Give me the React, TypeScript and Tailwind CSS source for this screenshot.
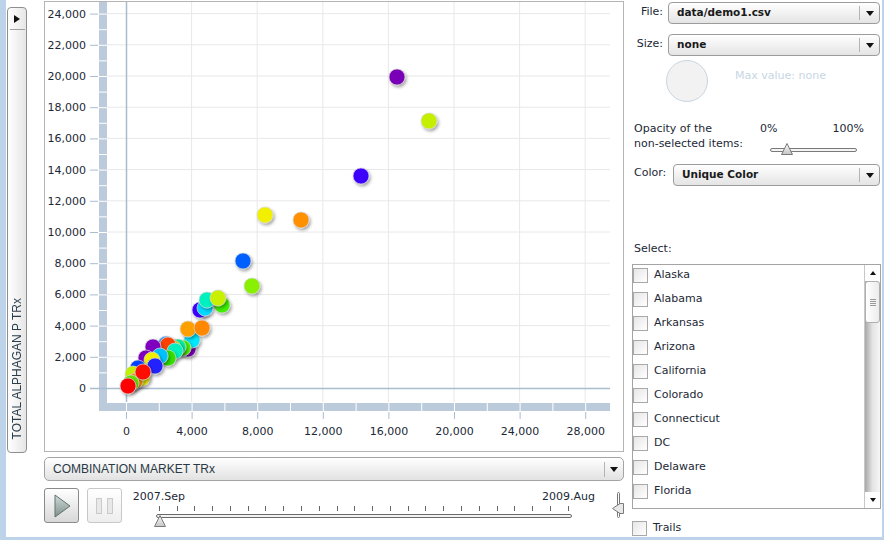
import React from "react";

const TEXT = "#1c2836";
const AXIS = "#a9bdd0";
const BAR = "#bccbdb";

const px = (v: number) => 126 + (v * 65.6) / 4000;
const py = (v: number) => 388 - (v * 31.2) / 2000;

// page coordinates of the bubbles, drawn back to front
const BUBBLES: [number, number, string][] = [
  [397, 77, "#7a00b8"],
  [429, 121, "#c4f000"],
  [361, 176, "#3c00ff"],
  [265, 215, "#f0f000"],
  [301, 220, "#ff9000"],
  [243, 261, "#0060ff"],
  [252, 286, "#88f000"],
  [200, 310, "#3c00ff"],
  [222, 305, "#40f000"],
  [205, 308, "#00d8ff"],
  [207, 300, "#00f0c0"],
  [218, 298, "#c8f000"],
  [188, 349, "#8000c0"],
  [192, 340, "#00e8ff"],
  [188, 329, "#ffa000"],
  [202, 328, "#ff8800"],
  [166, 344, "#40a0ff"],
  [183, 348, "#50f000"],
  [178, 347, "#00f0a0"],
  [173, 348, "#c8f000"],
  [168, 345, "#ff4000"],
  [175, 351, "#00f0c0"],
  [168, 358, "#30e000"],
  [153, 347, "#8000c0"],
  [146, 358, "#8000c0"],
  [160, 356, "#00c0ff"],
  [152, 360, "#f0f000"],
  [155, 366, "#2020ff"],
  [138, 368, "#0040ff"],
  [133, 374, "#c0f000"],
  [142, 378, "#f0f000"],
  [135, 381, "#ff9000"],
  [143, 372, "#ff1000"],
  [131, 383, "#60e000"],
  [128, 386, "#ff0000"],
];

function Chart() {
  const xTicks = [0, 4000, 8000, 12000, 16000, 20000, 24000, 28000];
  const yTicks = Array.from({ length: 13 }, (_, i) => i * 2000);
  return (
    <svg width={578} height={449} viewBox="45 2 578 449" className="block">
      <defs>
        <filter id="sh" x="-60%" y="-60%" width="220%" height="220%">
          <feDropShadow dx="1.5" dy="2" stdDeviation="1.4" floodColor="#000" floodOpacity="0.35" />
        </filter>
      </defs>
      {xTicks.slice(1).map((v) => (
        <line key={"gx" + v} x1={px(v)} x2={px(v)} y1={2} y2={402} stroke="#e8e8e8" />
      ))}
      {yTicks.slice(1).map((v) => (
        <line key={"gy" + v} x1={107} x2={610} y1={py(v)} y2={py(v)} stroke="#e8e8e8" />
      ))}
      <rect x={99} y={2} width={8} height={409} fill={BAR} />
      <rect x={99} y={403} width={511} height={8} fill={BAR} />
      {Array.from({ length: 25 }, (_, i) => (
        <line key={"sy" + i} x1={99} x2={107} y1={py(i * 1000) + 0.5} y2={py(i * 1000) + 0.5} stroke="#fff" />
      ))}
      {Array.from({ length: 15 }, (_, i) => (
        <line key={"sx" + i} x1={px(i * 2000) + 0.5} x2={px(i * 2000) + 0.5} y1={403} y2={411} stroke="#fff" />
      ))}
      <line x1={126.5} x2={126.5} y1={2} y2={402} stroke={AXIS} strokeWidth={1.5} />
      <line x1={90} x2={610} y1={388.5} y2={388.5} stroke={AXIS} strokeWidth={1.5} />
      {yTicks.map((v) => (
        <g key={"ty" + v}>
          <line x1={90} x2={98} y1={py(v) + 0.5} y2={py(v) + 0.5} stroke={AXIS} />
          <text
            x={86}
            y={py(v) + 4}
            textAnchor="end"
            fontSize={11}
            fontFamily="'DejaVu Sans', sans-serif"
            fill={TEXT}
          >
            {v === 0 ? "0" : v.toLocaleString("en-US")}
          </text>
        </g>
      ))}
      {xTicks.map((v) => (
        <g key={"tx" + v}>
          <line x1={px(v) + 0.5} x2={px(v) + 0.5} y1={412} y2={419} stroke={AXIS} />
          <text
            x={px(v) + 0.5}
            y={435}
            textAnchor="middle"
            fontSize={11}
            fontFamily="'DejaVu Sans', sans-serif"
            fill={TEXT}
          >
            {v === 0 ? "0" : v.toLocaleString("en-US")}
          </text>
        </g>
      ))}
      {BUBBLES.map(([x, y, c], i) => (
        <circle
          key={i}
          cx={x}
          cy={y}
          r={8}
          fill={c}
          stroke="#d8d8d8"
          strokeOpacity={0.7}
          filter="url(#sh)"
        />
      ))}
    </svg>
  );
}

function Arrow() {
  return (
    <svg width={8} height={5} viewBox="0 0 8 5">
      <polygon points="0,0 8,0 4,5" fill="#111" />
    </svg>
  );
}

function Dropdown({ label, className = "" }: { label: string; className?: string }) {
  return (
    <div
      className={`flex h-[22px] items-center rounded-[4px] border border-[#9c9c9c] bg-gradient-to-b from-white to-[#e4e4e4] ${className}`}
    >
      <span className="flex-1 pl-[8px] text-[10.5px] font-bold text-[#1a1a1a]">{label}</span>
      <span className="h-[14px] w-px bg-[#b4b4b4]" />
      <span className="flex w-[19px] justify-center">
        <Arrow />
      </span>
    </div>
  );
}

function Checkbox() {
  return (
    <span className="block h-[15px] w-[15px] shrink-0 border border-[#a8a8a8] bg-gradient-to-br from-[#e6e6e6] to-white" />
  );
}

const STATES = [
  "Alaska",
  "Alabama",
  "Arkansas",
  "Arizona",
  "California",
  "Colorado",
  "Connecticut",
  "DC",
  "Delaware",
  "Florida",
];

export default function App() {
  return (
    <div className="h-[540px] w-[884px] bg-[#bdd3ea] pb-[3px] pl-[6px] pr-[2px] font-['DejaVu_Sans',sans-serif] text-[11px] text-[#1c2836]">
      <div className="flex h-full bg-white">
        {/* vertical axis tab */}
        <div className="w-[38px] pl-px pt-[7px]">
          <div className="flex h-[446px] w-[20px] flex-col items-center rounded-[4px] border border-[#8e8e8e] bg-gradient-to-r from-white to-[#e6e6e6]">
            <svg width={6} height={8} viewBox="0 0 6 8" className="mt-[7px]">
              <polygon points="0,0 6,4 0,8" fill="#111" />
            </svg>
            <span className="mt-[6px] h-px w-[15px] bg-[#a0a0a0]" />
            <span className="mt-auto mb-[13px] rotate-180 font-['Liberation_Sans',sans-serif] text-[12px] text-[#2c3e4c] [writing-mode:vertical-rl]">
              TOTAL ALPHAGAN P TRx
            </span>
          </div>
        </div>

        {/* chart column */}
        <div className="w-[580px]">
          <div className="mt-px h-[451px] border border-[#b5b5b5] bg-white">
            <Chart />
          </div>
          <div className="mt-[5px] flex h-[24px] items-center rounded-[5px] border border-[#a4a4a4] bg-gradient-to-b from-white to-[#e2e2e2]">
            <span className="flex-1 pl-[8px] font-['Liberation_Sans',sans-serif] text-[12px] text-[#2a3a44]">
              COMBINATION MARKET TRx
            </span>
            <span className="h-[15px] w-px bg-[#b4b4b4]" />
            <span className="flex w-[18px] justify-center">
              <Arrow />
            </span>
          </div>
          <div className="mt-[7px] flex items-start">
            <div className="flex h-[35px] w-[35px] items-center justify-center rounded-[3px] border border-[#8a8a8a] bg-gradient-to-b from-white to-[#d8d8d8]">
              <svg width={17} height={24} viewBox="0 0 17 24" className="ml-[2px]">
                <defs>
                  <linearGradient id="pl" x1="0" y1="0" x2="0" y2="1">
                    <stop offset="0" stopColor="#cfdad7" />
                    <stop offset="1" stopColor="#7f918d" />
                  </linearGradient>
                </defs>
                <polygon points="1,1 16,12 1,23" fill="url(#pl)" stroke="#62726f" strokeLinejoin="round" />
              </svg>
            </div>
            <div className="ml-[8px] flex h-[35px] w-[35px] items-center justify-center gap-[5px] rounded-[3px] border border-[#c8c8c8] bg-gradient-to-b from-white to-[#eeeeee]">
              <span className="h-[16px] w-[6px] border border-[#cacaca] bg-[#e8e8e8]" />
              <span className="h-[16px] w-[6px] border border-[#cacaca] bg-[#e8e8e8]" />
            </div>
            <div className="ml-[11px] mt-[2px] w-[473px]">
              <div className="flex justify-between pr-[9px] leading-[13px]">
                <span>2007.Sep</span>
                <span>2009.Aug</span>
              </div>
              <div className="relative ml-[23px] w-[416px]">
                <div className="ml-[3px] mt-[3px] flex w-[410px] justify-between">
                  {Array.from({ length: 24 }, (_, i) => (
                    <span key={i} className="h-[5px] w-px bg-[#666]" />
                  ))}
                </div>
                <div className="mt-[3px] h-[4px] w-[416px] rounded-full border border-[#6a6a6a] bg-[#f4f4f4]" />
                <svg width={12} height={12} viewBox="0 0 12 12" className="absolute left-[-2px] top-[9px]">
                  <defs>
                    <linearGradient id="th" x1="0" y1="0" x2="0" y2="1">
                      <stop offset="0" stopColor="#fafafa" />
                      <stop offset="1" stopColor="#c4c4c4" />
                    </linearGradient>
                  </defs>
                  <polygon points="6,0.5 11.5,11.5 0.5,11.5" fill="url(#th)" stroke="#7a7a7a" />
                </svg>
              </div>
            </div>
            <div className="relative ml-[8px] mt-[4px] h-[26px] w-[12px]">
              <span className="absolute left-[5px] top-0 h-[26px] w-[3px] rounded-full border border-[#777] bg-white" />
              <svg width={12} height={11} viewBox="0 0 12 11" className="absolute left-0 top-[11px]">
                <polygon points="0.5,5.5 8,0.5 11.5,0.5 11.5,10.5 8,10.5" fill="#e8e8e8" stroke="#7a7a7a" />
              </svg>
            </div>
          </div>
        </div>

        {/* settings column */}
        <div className="flex w-[258px] flex-col pl-[8px] pr-[2px]">
          <div className="mt-[2px] flex items-start">
            <span className="w-[31px] pt-[2px] text-right leading-[15px]">File:</span>
            <Dropdown label="data/demo1.csv" className="ml-[5px] w-[212px]" />
          </div>
          <div className="mt-[10px] flex items-start">
            <span className="w-[31px] pt-[2px] text-right leading-[15px]">Size:</span>
            <Dropdown label="none" className="ml-[5px] w-[212px]" />
          </div>
          <div className="mt-[4px] flex items-start">
            <span className="ml-[34px] h-[42px] w-[42px] rounded-full border border-[#c9d5e2] bg-[#f2f2f2]" />
            <span className="ml-[27px] pt-[8px] text-[#c8d6e4]">Max value: none</span>
          </div>
          <div className="mt-[19px] flex pl-[2px] leading-[15px]">
            <div className="w-[126px]">
              <div>Opacity of the</div>
              <div>non-selected items:</div>
            </div>
            <div className="w-[104px]">
              <div className="flex justify-between">
                <span>0%</span>
                <span>100%</span>
              </div>
              <div className="relative ml-[10px] mt-[12px] h-[4px] w-[87px] rounded-full border border-[#7a7a7a] bg-[#f4f4f4]">
                <svg width={12} height={12} viewBox="0 0 12 12" className="absolute left-[10px] top-[-6px]">
                  <defs>
                    <linearGradient id="th2" x1="0" y1="0" x2="0" y2="1">
                      <stop offset="0" stopColor="#fafafa" />
                      <stop offset="1" stopColor="#c4c4c4" />
                    </linearGradient>
                  </defs>
                  <polygon points="6,0.5 11.5,11.5 0.5,11.5" fill="url(#th2)" stroke="#7a7a7a" />
                </svg>
              </div>
            </div>
          </div>
          <div className="mt-[12px] flex items-start">
            <span className="w-[41px] pl-[2px] pt-[1px] leading-[15px]">Color:</span>
            <Dropdown label="Unique Color" className="w-[207px]" />
          </div>
          <div className="mt-[55px] pl-[2px] leading-[15px]">Select:</div>
          <div className="mt-[8px] flex h-[245px] w-[249px] border border-[#a4a4a4] bg-white">
            <div className="flex flex-1 flex-col gap-[9px] overflow-hidden pt-[3px]">
              {STATES.map((s) => (
                <div key={s} className="flex h-[15px] shrink-0 items-center">
                  <Checkbox />
                  <span className="ml-[6px]">{s}</span>
                </div>
              ))}
              <div className="flex h-[15px] shrink-0 items-center">
                <Checkbox />
              </div>
            </div>
            <div className="flex w-[16px] flex-col border-l border-[#c8c8c8] bg-gradient-to-r from-[#a8a8a8] via-[#e4e4e4] to-[#f6f6f6]">
              <div className="flex h-[16px] items-center justify-center bg-white">
                <svg width={6} height={4} viewBox="0 0 6 4">
                  <polygon points="0,4 6,4 3,0" fill="#111" />
                </svg>
              </div>
              <div className="flex h-[42px] flex-col items-center justify-center gap-[1px] rounded-[3px] border border-[#b0b0b0] bg-gradient-to-r from-white to-[#ececec]">
                {[0, 1, 2, 3].map((i) => (
                  <span key={i} className="h-px w-[6px] bg-[#9a9a9a]" />
                ))}
              </div>
              <div className="flex-1" />
              <div className="flex h-[16px] items-center justify-center bg-white">
                <svg width={6} height={4} viewBox="0 0 6 4">
                  <polygon points="0,0 6,0 3,4" fill="#111" />
                </svg>
              </div>
            </div>
          </div>
          <div className="mt-[11px] flex items-center">
            <Checkbox />
            <span className="ml-[6px]">Trails</span>
          </div>
        </div>
      </div>
    </div>
  );
}
